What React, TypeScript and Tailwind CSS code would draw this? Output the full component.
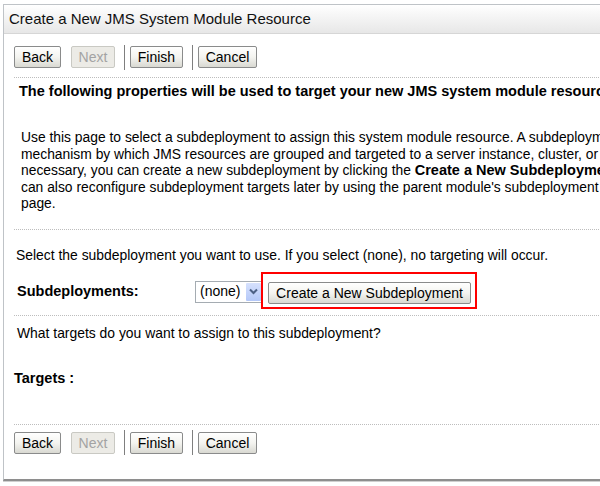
import type { ReactNode } from 'react'

const font = { fontFamily: '"Liberation Sans", Arial, sans-serif' }

function Btn({ label, w, disabled }: { label: string; w: string; disabled?: boolean }) {
  return (
    <button
      className={
        disabled
          ? `${w} h-[22px] rounded-[2px] border border-[#c9c9c3] bg-[#ecebe6] text-[14px] leading-none text-[#a3a3a3]`
          : `${w} h-[22px] rounded-[2px] border border-[#8a8b8b] bg-gradient-to-b from-white via-[#f4f4f0] to-[#d9d9d2] text-[14px] leading-none text-black`
      }
    >
      {label}
    </button>
  )
}

function Sep() {
  return <div className="w-px h-[25px] bg-[#7f7f7f]" />
}

function ButtonBar() {
  return (
    <div className="flex items-center h-[22px]">
      <Btn label="Back" w="w-[47px]" />
      <div className="ml-[10px]">
        <Btn label="Next" w="w-[44px]" disabled />
      </div>
      <div className="ml-[9px]">
        <Sep />
      </div>
      <div className="ml-[5px]">
        <Btn label="Finish" w="w-[53px]" />
      </div>
      <div className="ml-[9px]">
        <Sep />
      </div>
      <div className="ml-[5px]">
        <Btn label="Cancel" w="w-[59px]" />
      </div>
    </div>
  )
}

function Dots({ className = '' }: { className?: string }) {
  return <div className={`h-0 border-t border-dotted border-[#bdbdbd] ${className}`} />
}

function Line({ className = '', children }: { className?: string; children: ReactNode }) {
  return <div className={`flex items-center whitespace-nowrap ${className}`}>{children}</div>
}

export default function App() {
  return (
    <div className="w-[600px] h-[486px] overflow-hidden bg-white text-black" style={font}>
      <div className="mt-[4px] ml-[3px] w-[760px] border-t border-l border-[#bfc3c7] border-b-2 border-b-[#8e8e8e] shadow-[0_1px_0_#cfcfcf]">
        {/* Title bar */}
        <div className="h-[29px] border-b border-[#d6d6d6] bg-gradient-to-b from-white to-[#e7e7e7] flex items-center pl-[5px]">
          <span className="text-[15px] text-[#111]">Create a New JMS System Module Resource</span>
        </div>

        <div className="pl-[10px]">
          <div className="pt-[12px]">
            <ButtonBar />
          </div>
          <Dots className="mt-[9px]" />

          <Line className="h-[28px] pl-[5px] text-[14.5px] font-bold">
            The following properties will be used to target your new JMS system module resource
          </Line>

          <div className="mt-[23px] pl-[7px] text-[13.85px] leading-[16.6px] whitespace-nowrap">
            <div>Use this page to select a subdeployment to assign this system module resource. A subdeployment is a</div>
            <div>mechanism by which JMS resources are grouped and targeted to a server instance, cluster, or SAF agent. If</div>
            <div>
              necessary, you can create a new subdeployment by clicking the{' '}
              <b className="text-[14.5px]">Create a New Subdeployment</b> button. You
            </div>
            <div>can also reconfigure subdeployment targets later by using the parent module's subdeployment management</div>
            <div>page.</div>
          </div>

          <Dots className="mt-[17px]" />

          <Line className="mt-[15px] h-[20px] pl-[2px] text-[13.9px]">
            Select the subdeployment you want to use. If you select (none), no targeting will occur.
          </Line>

          {/* Subdeployments row */}
          <div className="mt-[9px] h-[36px] flex items-center pl-[3px]">
            <span className="w-[178px] text-[14.5px] font-bold">Subdeployments:</span>
            <div className="w-[68px] h-[22px] border border-[#a5acb2] flex items-center justify-between pl-[4px] pr-[1px] bg-white">
              <span className="text-[14px]">(none)</span>
              <span className="w-[15px] h-[18px] rounded-[1px] bg-gradient-to-b from-[#d6e1fd] to-[#b4c8f8] flex items-center justify-center">
                <svg width="9" height="7" viewBox="0 0 9 7">
                  <path d="M1 1.5 L4.5 5 L8 1.5" fill="none" stroke="#4d6185" strokeWidth="2" />
                </svg>
              </span>
            </div>
            <div className="relative ml-[5px] top-[1px]">
              <button className="w-[203px] h-[22px] rounded-[2px] border border-[#8a8b8b] bg-gradient-to-b from-white via-[#f4f4f0] to-[#d9d9d2] text-[14px] leading-none">
                Create a New Subdeployment
              </button>
              <span className="absolute left-[-7px] top-[-9px] w-[216px] h-[37px] border-2 border-[#ff0000] pointer-events-none" />
            </div>
          </div>

          <Dots className="mt-[5px]" />

          <Line className="mt-[7px] h-[20px] pl-[3px] text-[13.9px]">
            What targets do you want to assign to this subdeployment?
          </Line>

          <Line className="mt-[26px] h-[20px] text-[14.5px] font-bold">Targets :</Line>

          <Dots className="mt-[35px]" />

          <div className="mt-[7px] pb-[25px]">
            <ButtonBar />
          </div>
        </div>
      </div>
    </div>
  )
}
